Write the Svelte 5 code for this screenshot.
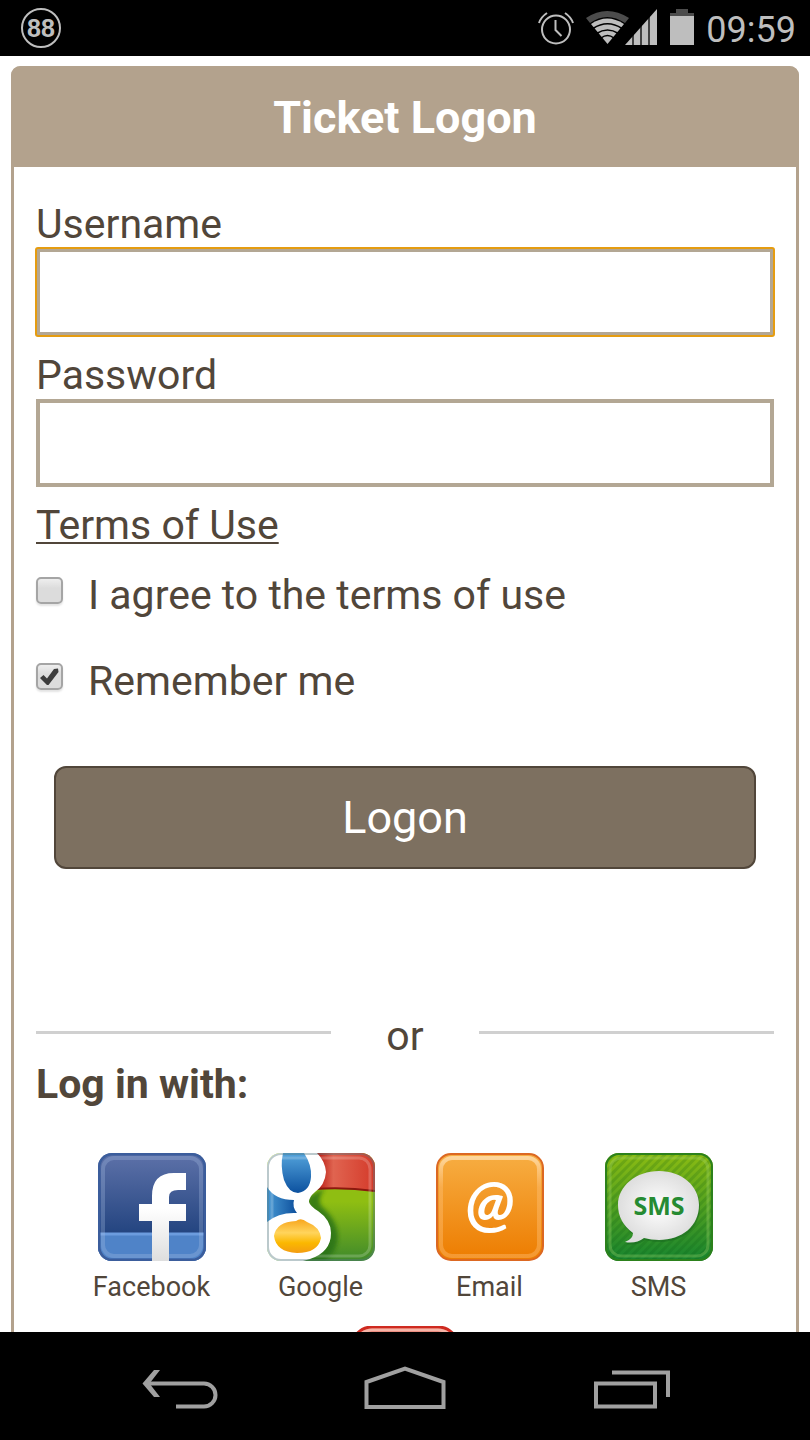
<script lang="ts">
  let username = $state('');
  let password = $state('');
  let agreed = $state(false);
  let remember = $state(true);
  let activeField = $state('username');

  function logon(e: SubmitEvent) {
    e.preventDefault();
  }
</script>

<div class="screen">
  <header class="status-bar">
    <svg class="badge" viewBox="0 0 42 42" aria-hidden="true">
      <circle cx="21" cy="21" r="19" fill="none" stroke="#bebebe" stroke-width="2" />
      <text x="21" y="30" text-anchor="middle">88</text>
    </svg>
    <div class="status-icons">
      <svg width="36" height="38" viewBox="0 0 36 38" aria-hidden="true">
        <g fill="none" stroke="#bebebe" stroke-width="2">
          <circle cx="18" cy="20.5" r="14" />
          <path d="M17.5 11v10l6 6M1 14Q3 8 9 4M35 14Q33 8 27 4" />
        </g>
      </svg>
      <svg width="72" height="38" viewBox="0 0 72 38" aria-hidden="true">
        <path d="M0 9Q21-5 43 9L39 14Q21 2 4 14Z" fill="#4c4c4c" />
        <path d="M5 15Q21 4 38 15L21.500 35Z" fill="#bebebe" />
        <path d="M7 19.500Q21.500 10 36 19.500M10.500 24.500Q21.500 17.500 32.500 24.500M15 29Q21.500 24 28 29" fill="none" stroke="#000" stroke-width="1.500" />
        <path d="M39 36L71 0V36Z" fill="#bebebe" />
        <path d="M47 20v17M55 12v25M63 5v32" stroke="#000" stroke-width="1.300" />
      </svg>
      <svg width="24" height="38" viewBox="0 0 24 38" aria-hidden="true">
        <path d="M6 0h12v4h6v4H0V4h6Z" fill="#4c4c4c" />
        <path d="M0 7h24v29H0z" fill="#bebebe" />
      </svg>
      <time>09:59</time>
    </div>
  </header>

  <main>
    <section class="card">
      <h1>Ticket Logon</h1>
      <div class="card-body">
        <form onsubmit={logon}>
          <label class="field-label" for="username">Username</label>
          <input
            id="username"
            class="field"
            class:active={activeField === 'username'}
            type="text"
            bind:value={username}
            onfocus={() => { activeField = 'username'; }}
          />
          <label class="field-label" for="password">Password</label>
          <input
            id="password"
            class="field"
            class:active={activeField === 'password'}
            type="password"
            bind:value={password}
            onfocus={() => { activeField = 'password'; }}
          />
          <a class="terms" href="#terms">Terms of Use</a>

          <label class="check">
            <span class="box">
              <input type="checkbox" bind:checked={agreed} />
              {#if agreed}{@render tick()}{/if}
            </span>
            I agree to the terms of use
          </label>
          <label class="check">
            <span class="box">
              <input type="checkbox" bind:checked={remember} />
              {#if remember}{@render tick()}{/if}
            </span>
            Remember me
          </label>

          <button class="logon" type="submit">Logon</button>
        </form>

        <div class="divider"><span>or</span></div>

        <h2>Log in with:</h2>
        <div class="providers">
          <button class="provider">
            <svg viewBox="0 0 108 108" aria-hidden="true">
              <defs>
                <clipPath id="tile"><rect width="108" height="108" rx="14" /></clipPath>
                <linearGradient id="fb" x2="0" y2="1">
                  <stop stop-color="#5e72a9" />
                  <stop offset="0.75" stop-color="#234480" />
                </linearGradient>
                <linearGradient id="fb-letter" x2="0" y2="1">
                  <stop offset="0.4" stop-color="#fff" />
                  <stop offset="1" stop-color="#dedede" />
                </linearGradient>
              </defs>
              <g clip-path="url(#tile)">
                <path d="M0 0h108v108H0z" fill="url(#fb)" />
                <path d="M0 81h108v27H0z" fill="#4f83c8" />
                <path d="M0 81h108" stroke="#6c9cde" stroke-width="3" />
                <rect x="1" y="1" width="106" height="106" rx="13" fill="none" stroke="#3b5d9c" stroke-width="3" />
                <rect x="5" y="5" width="98" height="98" rx="11" fill="none" stroke="#a9bfe6" stroke-width="4" opacity="0.3" />
                <path d="M54 108V68H41V51H54V43Q54 20 76 20H88V37H80Q71 37 71 44V51H88V68H71V108Z" fill="url(#fb-letter)" />
              </g>
            </svg>
            Facebook
          </button>
          <button class="provider">
            <svg viewBox="0 0 108 108" aria-hidden="true">
              <defs>
                <linearGradient id="g-red">
                  <stop offset="0.1" stop-color="#b61a12" />
                  <stop offset="0.35" stop-color="#e06450" />
                  <stop offset="1" stop-color="#d43a2a" />
                </linearGradient>
                <linearGradient id="g-green" x2="0" y2="1">
                  <stop offset="0.45" stop-color="#8fbe12" />
                  <stop offset="1" stop-color="#3f8a2b" />
                </linearGradient>
                <linearGradient id="g-blue" x2="0" y2="1">
                  <stop stop-color="#54a4dc" />
                  <stop offset="1" stop-color="#0c519f" />
                </linearGradient>
                <linearGradient id="g-side">
                  <stop stop-color="#4799d4" />
                  <stop offset="1" stop-color="#0d4f9c" />
                </linearGradient>
                <linearGradient id="g-yellow" x2="0" y2="1">
                  <stop stop-color="#f8a51d" />
                  <stop offset="0.4" stop-color="#ffd45c" />
                  <stop offset="0.7" stop-color="#fbb800" />
                  <stop offset="1" stop-color="#f39c12" />
                </linearGradient>
                <filter id="soft"><feGaussianBlur stdDeviation="2" /></filter>
              </defs>
              <g clip-path="url(#tile)">
                <path d="M0 0h108v108H0z" fill="url(#g-green)" />
                <path d="M58 35Q50 45 54 53Q70 66 71 84Q70 99 58 108H40V44Z" fill="#286f12" opacity="0.8" filter="url(#soft)" />
                <path d="M44 0h64v38Q76 34 48 36Z" fill="url(#g-red)" />
                <path d="M48 36Q78 34 108 38" fill="none" stroke="#8c180f" stroke-width="2" />
                <path d="M0 0H50Q58 8 59 19Q58 32 48 39Q42 44 42 49Q43 53 51 58Q64 67 64 80Q64 99 43 106L36 108H0Z" fill="#fff" />
                <path d="M16 0H37Q45 12 44 24Q43 38 31 40Q22 40 17 27Q13 13 16 0Z" fill="url(#g-blue)" />
                <path d="M0 34Q8 47 27 47Q25 54 30 60Q12 59 0 69Z" fill="url(#g-side)" />
                <path d="M7 83Q9 69 29 68Q34 64 40 69Q53 74 54 85Q51 100 30 100Q9 99 7 83Z" fill="url(#g-yellow)" />
                <rect x="1" y="1" width="106" height="106" rx="13" fill="none" stroke="#567980" stroke-width="2" opacity="0.4" />
                <rect x="5" y="5" width="98" height="98" rx="11" fill="none" stroke="#fff" stroke-width="3" opacity="0.2" />
              </g>
            </svg>
            Google
          </button>
          <button class="provider">
            <svg viewBox="0 0 108 108" aria-hidden="true">
              <defs>
                <linearGradient id="mail" x2="0" y2="1">
                  <stop stop-color="#f7ae43" />
                  <stop offset="1" stop-color="#ed7c00" />
                </linearGradient>
                <linearGradient id="mail-glow" x2="0" y2="1">
                  <stop stop-color="#ffe0b0" stop-opacity="0.8" />
                  <stop offset="0.3" stop-color="#ffc27a" stop-opacity="0.4" />
                </linearGradient>
              </defs>
              <rect x="1" y="1" width="106" height="106" rx="14" fill="url(#mail)" stroke="#dc6822" stroke-width="2" />
              <rect x="5" y="5" width="98" height="98" rx="11" fill="none" stroke="url(#mail-glow)" stroke-width="4" />
              <text class="at" x="54" y="72" text-anchor="middle">@</text>
            </svg>
            Email
          </button>
          <button class="provider">
            <svg viewBox="0 0 108 108" aria-hidden="true">
              <defs>
                <linearGradient id="sms" x2="0" y2="1">
                  <stop stop-color="#8cbc12" />
                  <stop offset="1" stop-color="#16842f" />
                </linearGradient>
                <radialGradient id="bubble">
                  <stop stop-color="#fff" />
                  <stop offset="1" stop-color="#dedede" />
                </radialGradient>
                <pattern id="stripes" width="6" height="6" patternUnits="userSpaceOnUse" patternTransform="rotate(45)">
                  <path d="M0 0h3v6H0z" fill="#075b13" opacity="0.18" />
                </pattern>
              </defs>
              <rect width="108" height="108" rx="14" fill="url(#sms)" />
              <rect width="108" height="108" rx="14" fill="url(#stripes)" />
              <rect x="1" y="1" width="106" height="106" rx="13" fill="none" stroke="#2c811c" stroke-width="2" />
              <rect x="5" y="5" width="98" height="98" rx="11" fill="none" stroke="#a9dc72" stroke-width="3" opacity="0.3" />
              <path d="M54 18C77 18 94 33 94 52C94 73 77 87 54 87Q46 87 39 85Q31 91 20 89Q28 86 28 80Q13 69 13 52C13 33 31 18 54 18Z" fill="#176520" opacity="0.5" transform="translate(1 2)" />
              <path d="M54 18C77 18 94 33 94 52C94 73 77 87 54 87Q46 87 39 85Q31 91 20 89Q28 86 28 80Q13 69 13 52C13 33 31 18 54 18Z" fill="url(#bubble)" />
              <text class="sms" x="54" y="62" text-anchor="middle">SMS</text>
            </svg>
            SMS
          </button>
          <button class="provider" aria-label="Other">
            <svg viewBox="0 0 108 108" aria-hidden="true">
              <rect x="1" y="1" width="106" height="106" rx="20" fill="#e2665a" stroke="#cf2a20" stroke-width="3" />
              <rect x="4" y="4" width="100" height="100" rx="17" fill="none" stroke="#f6b5a8" stroke-width="3" />
            </svg>
          </button>
        </div>
      </div>
    </section>
  </main>

  <nav class="nav-bar">
    <button aria-label="Back">
      <svg viewBox="0 0 84 48">
        <path d="M9 21.500H66A11.500 11.500 0 0 1 66 44.500H38" />
        <path d="M22 8H16L4.500 21.500 16 35H22L11.500 21.500Z" class="solid" />
      </svg>
    </button>
    <button aria-label="Home">
      <svg viewBox="0 0 84 48"><path d="M3.500 45V20L42 6.500 80.500 20V45Z" /></svg>
    </button>
    <button aria-label="Recent apps">
      <svg viewBox="0 0 84 48"><path d="M8 21.500H67V44.500H8ZM24 10.500H80V35" /></svg>
    </button>
  </nav>
</div>

{#snippet tick()}
  <svg class="tick" viewBox="0 0 27 27" aria-hidden="true">
    <path d="M4 15L7.500 12 11 15.500 18 6 22 5.500 22.500 9 12.500 22H11Z" fill="#3c3c3c" />
  </svg>
{/snippet}

<style>
  :global(body) {
    background: #fff;
  }

  .screen {
    height: 100vh;
    display: flex;
    flex-direction: column;
    font-family: Roboto, sans-serif;
    font-size: 41px;
    line-height: 48px;
    color: #51463a;
  }

  .status-bar {
    display: flex;
    align-items: center;
    justify-content: space-between;
    flex-shrink: 0;
    height: 56px;
    padding: 0 14px 0 20px;
    background: #000;
    color: #bebebe;
  }

  .badge {
    width: 42px;
    height: 42px;
  }

  .badge text {
    font-family: 'Liberation Sans', sans-serif;
    font-size: 25px;
    font-weight: 700;
    fill: #bebebe;
  }

  .status-icons {
    display: flex;
    align-items: center;
    gap: 12px;
  }

  .status-icons time {
    font-size: 36px;
    line-height: 40px;
    padding-top: 3px;
  }

  main {
    flex: 1;
    min-height: 0;
    overflow: hidden;
    padding: 10px 11px 0;
  }

  .card {
    border: 3px solid #b3a28d;
    border-top: 0;
    border-radius: 10px;
  }

  h1 {
    margin: 0 -3px;
    padding: 28px 0 25px;
    border-radius: 9px 9px 0 0;
    background: #b3a28d;
    color: #fff;
    font-size: 45px;
    font-weight: 700;
    line-height: 48px;
    text-align: center;
  }

  .card-body {
    padding: 18px 22px;
  }

  form {
    display: flex;
    flex-direction: column;
  }

  .field-label {
    padding: 15px 0 0;
  }

  .field {
    box-sizing: border-box;
    width: 100%;
    height: 88px;
    padding: 0 12px;
    border: 4px solid #b3a794;
    border-radius: 0;
    background: #fff;
    font: inherit;
    color: inherit;
    outline: none;
  }

  .field.active {
    outline: 2px solid #e59c10;
    outline-offset: -1px;
    border-radius: 2px;
  }

  .terms {
    align-self: flex-start;
    margin-top: 14px;
    color: inherit;
    text-decoration-thickness: 2px;
    text-underline-offset: 3px;
    text-decoration-skip-ink: none;
  }

  .check {
    display: flex;
    gap: 25px;
    margin: 22px 0 16px;
  }

  .check + .check {
    margin-bottom: 61px;
  }

  .box {
    display: grid;
    align-self: flex-start;
    margin-top: 6px;
  }

  .box input {
    grid-area: 1 / 1;
    appearance: none;
    width: 27px;
    height: 27px;
    margin: 0;
    border: 2px solid #a5a5a5;
    border-radius: 5px;
    background: linear-gradient(#eee, #dcdcdc 40%);
    box-shadow: 0 2px 2px #e4e4e4;
  }

  .tick {
    grid-area: 1 / 1;
    width: 27px;
    height: 27px;
    pointer-events: none;
  }

  .logon {
    height: 103px;
    margin: 0 18px;
    padding: 0;
    border: 2px solid #51463a;
    border-radius: 12px;
    background: #7d7060;
    color: #fff;
    font: inherit;
    font-size: 45px;
  }

  .divider {
    display: grid;
    grid-template-columns: 2fr 1fr 2fr;
    align-items: center;
    margin-top: 143px;
    text-align: center;
  }

  .divider::before,
  .divider::after {
    content: '';
    height: 3px;
    margin-bottom: 8px;
    background: #d0d0d0;
  }

  h2 {
    margin: 0;
    font-size: 41px;
    font-weight: 700;
    line-height: 48px;
  }

  .providers {
    display: flex;
    flex-wrap: wrap;
    justify-content: center;
    margin-top: 45px;
  }

  .provider {
    display: flex;
    flex-direction: column;
    align-items: center;
    gap: 10px;
    width: 169px;
    height: 173px;
    padding: 0;
    border: 0;
    background: none;
    color: inherit;
    font: inherit;
    font-size: 27px;
    line-height: 32px;
  }

  .provider svg {
    width: 108px;
    height: 108px;
  }

  .at {
    font-family: Lato, sans-serif;
    font-size: 64px;
    font-style: italic;
    font-weight: 700;
    fill: #fff;
  }

  .sms {
    font-family: 'Noto Sans', sans-serif;
    font-size: 25px;
    font-weight: 700;
    fill: #268b32;
  }

  .nav-bar {
    display: grid;
    grid-template-columns: repeat(3, 1fr);
    flex-shrink: 0;
    height: 108px;
    padding: 0 68px;
    background: #000;
  }

  .nav-bar button {
    display: flex;
    align-items: center;
    justify-content: center;
    padding: 0;
    border: 0;
    background: none;
  }

  .nav-bar svg {
    width: 84px;
    height: 48px;
    fill: none;
    stroke: #a0a0a0;
    stroke-width: 4;
  }

  .nav-bar .solid {
    fill: #a0a0a0;
    stroke: none;
  }
</style>
